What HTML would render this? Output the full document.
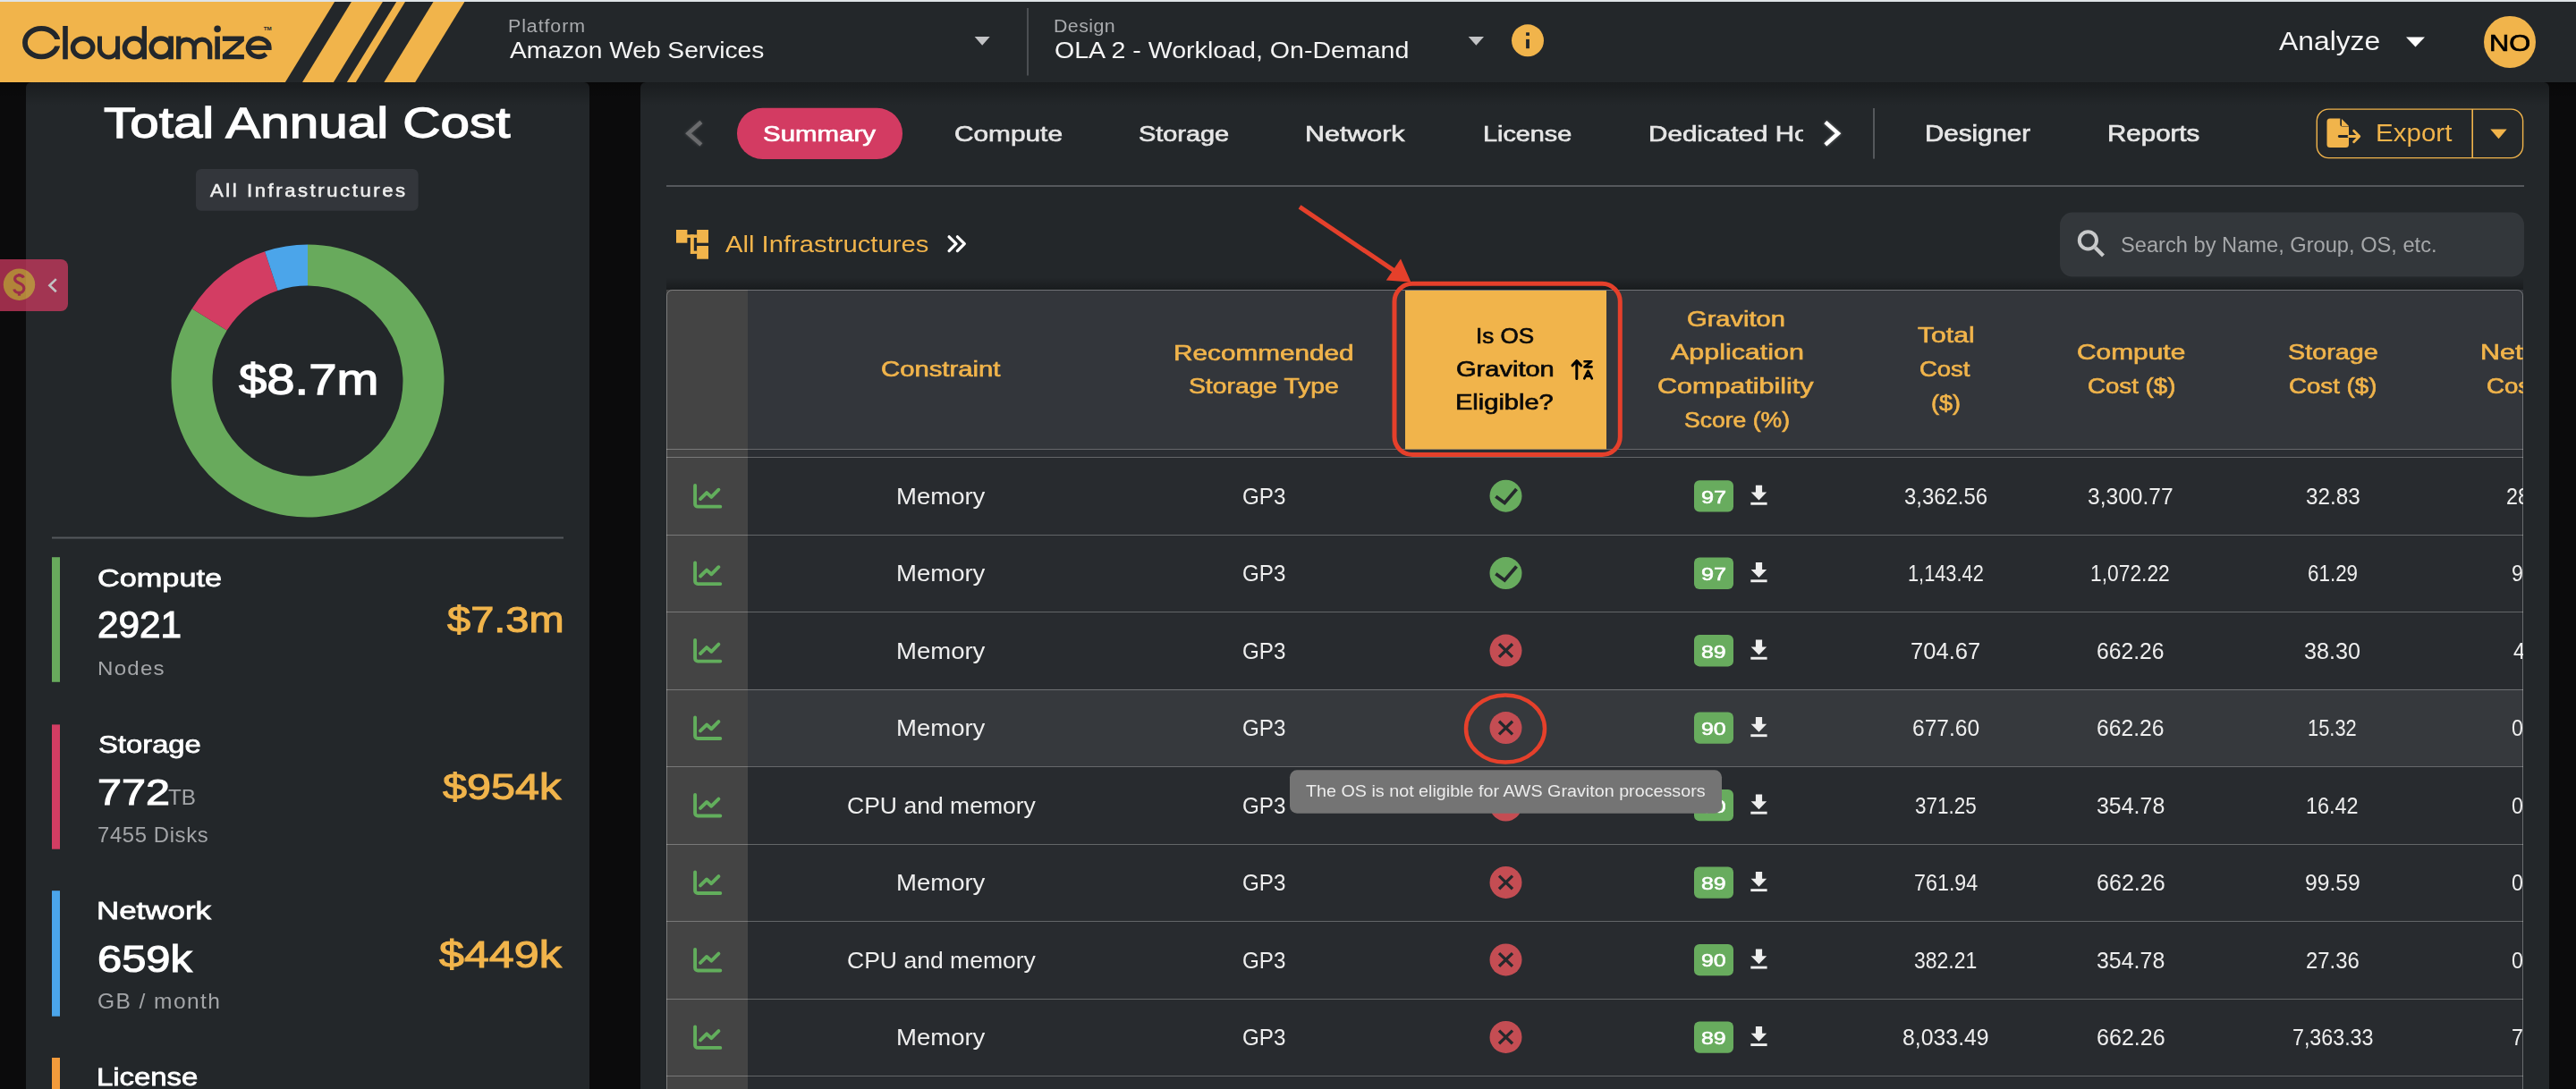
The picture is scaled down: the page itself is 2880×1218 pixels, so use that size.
<!DOCTYPE html>
<html><head><meta charset="utf-8"><title>Cloudamize</title>
<style>
html,body{margin:0;padding:0;width:2880px;height:1218px;overflow:hidden;background:#0b0b0c;}
body{position:relative;font-family:"Liberation Sans",sans-serif;}
.L{position:absolute;left:0;top:0;display:block;}
.t{position:absolute;white-space:nowrap;transform-origin:0 0;}
.clip{position:absolute;overflow:hidden;}
</style></head><body>
<svg class="L" width="2880" height="1218" viewBox="0 0 2880 1218"><rect x="0" y="0" width="2880" height="2" fill="#dfe4e7"/><rect x="0" y="2" width="2880" height="90" fill="#23272a"/><polygon points="0,2 374.1,2 318.9,92 0,92" fill="#F1B44B"/><polygon points="392.9,2 427.9,2 372.9,92 338.0,92" fill="#F1B44B"/><polygon points="443.2,2 453.0,2 397.8,92 387.8,92" fill="#F1B44B"/><polygon points="484.5,2 519.4,2 464.2,92 429.3,92" fill="#F1B44B"/><g><defs><clipPath id="cc"><path d="M0 0 H67 V43.9 H52 V51.4 H67 V80 H0 Z"/></clipPath></defs><ellipse cx="46.3" cy="47.65" rx="18.35" ry="15.8" fill="none" stroke="#23272b" stroke-width="5.8" clip-path="url(#cc)"/><rect x="70.2" y="29" width="5.6" height="37.3" fill="#23272b"/><ellipse cx="92.6" cy="53.35" rx="11.1" ry="10.2" fill="none" stroke="#23272b" stroke-width="5.5"/><path d="M 111.5 40.4 V 54 A 10 10 0 0 0 131.6 54" fill="none" stroke="#23272b" stroke-width="5.0"/><rect x="129.1" y="40.4" width="5" height="25.9" fill="#23272b"/><ellipse cx="150" cy="53.4" rx="10.6" ry="10.3" fill="none" stroke="#23272b" stroke-width="5.5"/><rect x="158.7" y="29.1" width="5.3" height="37.2" fill="#23272b"/><ellipse cx="180" cy="53.4" rx="10.8" ry="10.3" fill="none" stroke="#23272b" stroke-width="5.5"/><rect x="188.3" y="40.4" width="5.6" height="25.9" fill="#23272b"/><path d="M 199.7 66.3 V 40.4 M 199.7 52 A 8.8 8.8 0 0 1 217.2 52 V 66.3 M 217.2 52 A 8.8 8.8 0 0 1 234.7 52 V 66.3" fill="none" stroke="#23272b" stroke-width="5.2"/><rect x="240.3" y="40.6" width="5.6" height="25.7" fill="#23272b"/><circle cx="243.1" cy="32.4" r="3.8" fill="#23272b"/><path d="M 248.8 40.6 H 272.9 V 45.9 L 255.5 60.9 H 272.9 V 66.3 H 248.8 V 61 L 266.2 45.9 H 248.8 Z" fill="#23272b"/><path d="M 277.5 53.3 H 301 A 11.8 10.3 0 1 0 297.5 60.5" fill="none" stroke="#23272b" stroke-width="5.3"/><text x="294.8" y="34" font-family="Liberation Sans" font-size="6.2" font-weight="bold" fill="#23272b">TM</text></g><polygon points="1089.6,41 1106.7,41 1098.15,50.7" fill="#c2c3c5"/><rect x="1148" y="9" width="2" height="75.5" fill="#4b4e52"/><polygon points="1641.7,41 1659,41 1650.35,50.7" fill="#c2c3c5"/><circle cx="1708" cy="45.3" r="18" fill="#F1B44B"/><rect x="1706.1" y="36.3" width="3.8" height="3.6" fill="#23272a"/><rect x="1706.1" y="43.9" width="3.8" height="10.3" fill="#23272a"/><polygon points="2690,41.6 2711,41.6 2700.5,52.5" fill="#ffffff"/><circle cx="2806" cy="46.9" r="29" fill="#F1B44B"/><rect x="0" y="92" width="2880" height="1126" fill="#0b0b0c"/><path d="M29 98 a6 6 0 0 1 6 -6 H653 a6 6 0 0 1 6 6 V1218 H29 Z" fill="#23272a"/><path d="M716 98 a6 6 0 0 1 6 -6 H2844 a6 6 0 0 1 6 6 V1218 H716 Z" fill="#23272a"/><defs><linearGradient id="tg" x1="0" y1="0" x2="0" y2="1"><stop offset="0" stop-color="#000" stop-opacity="0.28"/><stop offset="1" stop-color="#000" stop-opacity="0"/></linearGradient></defs><rect x="29" y="92" width="630" height="26" fill="url(#tg)"/><rect x="716" y="92" width="2134" height="26" fill="url(#tg)"/><rect x="0" y="92" width="29" height="18" fill="url(#tg)"/><rect x="659" y="92" width="57" height="18" fill="url(#tg)"/><rect x="2850" y="92" width="30" height="18" fill="url(#tg)"/><rect x="219" y="189" width="248.6" height="46.7" rx="6" fill="#33363b"/><path d="M344.00 273.50 A152.5 152.5 0 1 1 214.67 345.19 L253.68 369.56 A106.5 106.5 0 1 0 344.00 319.50 Z" fill="#68AA5C"/><path d="M214.67 345.19 A152.5 152.5 0 0 1 296.12 281.21 L310.56 324.89 A106.5 106.5 0 0 0 253.68 369.56 Z" fill="#D33D63"/><path d="M296.12 281.21 A152.5 152.5 0 0 1 344.00 273.50 L344.00 319.50 A106.5 106.5 0 0 0 310.56 324.89 Z" fill="#4BA5EA"/><rect x="58" y="600.5" width="572" height="2" fill="#55585c"/><g opacity="0.72"><path d="M0 290 H68 a8 8 0 0 1 8 8 V340 a8 8 0 0 1 -8 8 H0 Z" fill="#D33B62"/><circle cx="21.5" cy="318.2" r="17.7" fill="#F1B44B"/><path d="M26.3 310.6 C25.5 308.6 23.6 307.9 21.5 307.9 C18.3 307.9 16.6 309.8 16.6 312.1 C16.6 317.5 26.8 315.6 26.8 322.4 C26.8 325.3 24.5 327.4 21.5 327.4 C18.6 327.4 16.4 326 15.8 323.5 M21.5 306 V309.5 M21.5 326 V330.8" fill="none" stroke="#D33B62" stroke-width="3.2"/><path d="M62.8 312.1 L55.4 319.2 L62.8 326.2" fill="none" stroke="#ffffff" stroke-width="2.6"/></g><rect x="58" y="623.2" width="9" height="139.6" fill="#68AA5C"/><rect x="58" y="810.4" width="9" height="139.3" fill="#D33D63"/><rect x="58" y="996.2" width="9" height="140.5" fill="#4BA5EA"/><rect x="58" y="1183" width="9" height="40" fill="#F39B3B"/><defs><filter id="glow" x="-50%" y="-50%" width="200%" height="200%"><feGaussianBlur stdDeviation="1.6"/></filter></defs><path d="M783.9 136.5 L769.5 149.2 L783.9 161.9" fill="none" stroke="#8a8b8d" stroke-width="5" opacity="0.35" filter="url(#glow)"/><path d="M783.9 136.5 L769.5 149.2 L783.9 161.9" fill="none" stroke="#6a6b6d" stroke-width="4.4"/><rect x="824" y="120.7" width="185" height="57.3" rx="28.6" fill="#D33B62"/><path d="M2040.8 136.7 L2055 149.2 L2040.8 161.9" fill="none" stroke="#ffffff" stroke-width="5" opacity="0.35" filter="url(#glow)"/><path d="M2040.8 136.7 L2055 149.2 L2040.8 161.9" fill="none" stroke="#ffffff" stroke-width="4.4"/><rect x="2094" y="121" width="2" height="56.6" fill="#55585c"/><rect x="2590.3" y="122.1" width="230.3" height="54.5" rx="13" fill="none" stroke="#F1B44B" stroke-width="1.4"/><rect x="2763.4" y="122" width="1.6" height="55" fill="#F1B44B"/><path d="M2605 132.6 H2616.3 V139 a2.5 2.5 0 0 0 2.5 2.5 H2626 V161.5 a3.5 3.5 0 0 1 -3.5 3.5 H2605 a3.5 3.5 0 0 1 -3.5 -3.5 V136.1 a3.5 3.5 0 0 1 3.5 -3.5 Z M2618 133 L2626 140.9 H2618 Z" fill="#F1B44B"/><path d="M2615.3 152.5 H2626" stroke="#23272a" stroke-width="2.8" stroke-linecap="round"/><path d="M2626 152.5 H2636.5 M2631.6 146.2 L2637.8 152.5 L2631.6 158.8" fill="none" stroke="#F1B44B" stroke-width="2.8" stroke-linecap="round" stroke-linejoin="round"/><polygon points="2784.3,144.4 2802.7,144.4 2793.5,155.3" fill="#F1B44B"/><rect x="745" y="207" width="2077" height="2" fill="#55585c"/><g fill="#F1B44B"><rect x="756" y="257" width="12.4" height="14.7"/><rect x="779.1" y="257" width="12.9" height="14.7"/><rect x="779.1" y="275" width="12.9" height="14.7"/><rect x="768" y="262.4" width="11.5" height="3.5"/><rect x="771.9" y="262.4" width="3.9" height="21.5"/><rect x="771.9" y="280.6" width="7.5" height="3.3"/></g><path d="M1061.1 264.8 L1069 272.7 L1061.1 280.6 M1070.4 264.8 L1078.3 272.7 L1070.4 280.6" fill="none" stroke="#ffffff" stroke-width="3.3" stroke-linecap="round" stroke-linejoin="round"/><rect x="2303" y="237.6" width="519" height="72" rx="14" fill="#33373b"/><circle cx="2334.4" cy="268.8" r="9.6" fill="none" stroke="#c8c9ca" stroke-width="4"/><path d="M2342.5 277 L2351.5 286" stroke="#c8c9ca" stroke-width="4.2"/><defs><linearGradient id="tg2" x1="0" y1="0" x2="0" y2="1"><stop offset="0" stop-color="#000" stop-opacity="0"/><stop offset="1" stop-color="#000" stop-opacity="0.3"/></linearGradient></defs><rect x="745" y="310" width="2076" height="14" fill="url(#tg2)"/><path d="M745 330 a6 6 0 0 1 6 -6 H2815 a6 6 0 0 1 6 6 V1218 H745 Z" fill="#282b2f"/><rect x="745" y="324" width="2076" height="178.39999999999998" fill="#33363b"/><rect x="745" y="502.4" width="2076" height="9" fill="#2b2e33"/><rect x="745" y="770.81" width="2076" height="86.47" fill="#36393d"/><rect x="745" y="324" width="91" height="894" fill="#444444"/><rect x="745" y="502" width="2076" height="1" fill="#ffffff" fill-opacity="0.28"/><rect x="745" y="511" width="2076" height="1" fill="#ffffff" fill-opacity="0.28"/><rect x="745" y="598" width="2076" height="1" fill="#ffffff" fill-opacity="0.28"/><rect x="745" y="684" width="2076" height="1" fill="#ffffff" fill-opacity="0.28"/><rect x="745" y="771" width="2076" height="1" fill="#ffffff" fill-opacity="0.28"/><rect x="745" y="857" width="2076" height="1" fill="#ffffff" fill-opacity="0.28"/><rect x="745" y="944" width="2076" height="1" fill="#ffffff" fill-opacity="0.28"/><rect x="745" y="1030" width="2076" height="1" fill="#ffffff" fill-opacity="0.28"/><rect x="745" y="1117" width="2076" height="1" fill="#ffffff" fill-opacity="0.28"/><rect x="745" y="1203" width="2076" height="1" fill="#ffffff" fill-opacity="0.28"/><path d="M745.5 1218 V330.5 a6 6 0 0 1 6 -6 H2814.5 a6 6 0 0 1 6 6 V1218" fill="none" stroke="#ffffff" stroke-opacity="0.3" stroke-width="1"/><rect x="1571" y="325" width="225" height="177.4" fill="#F1B44B"/><path d="M1762.8 423.5 V403.5 M1758 408.8 L1762.8 403.5 L1767.6 408.8" fill="none" stroke="#000" stroke-width="3" stroke-linecap="round" stroke-linejoin="round"/><path d="M1771.5 404.3 H1779.3 L1771.5 410.4 H1779.6" fill="none" stroke="#000" stroke-width="2.6" stroke-linecap="round" stroke-linejoin="round"/><path d="M1771.3 423.3 L1775.5 414.8 L1779.8 423.3 M1772.8 420.6 H1778.3" fill="none" stroke="#000" stroke-width="2.6" stroke-linecap="round" stroke-linejoin="round"/><path d="M777.1 543.03 V563.63 a3 3 0 0 0 3 3 H805.3 M783 558.03 L790.1 551.13 L795.3 555.84 L803.4 547.74" fill="none" stroke="#62AE5C" stroke-width="3.9" stroke-linecap="round" stroke-linejoin="round"/><circle cx="1683.5" cy="554.63" r="18" fill="#68AC5E"/><path d="M1672.3 555.24 L1682.2 562.53 L1695.5 547.03" fill="none" stroke="#25282c" stroke-width="3.8"/><rect x="1894" y="537.13" width="44" height="35.3" rx="6" fill="#68AC5E"/><path d="M1962.9 542.63 H1970.1 V550.43 H1975.2 L1966.5 559.43 L1957.6 550.43 H1962.9 Z" fill="#eeeeee"/><rect x="1957.3" y="561.84" width="18.3" height="2.9" fill="#eeeeee"/><path d="M777.1 629.50 V650.11 a3 3 0 0 0 3 3 H805.3 M783 644.50 L790.1 637.61 L795.3 642.31 L803.4 634.21" fill="none" stroke="#62AE5C" stroke-width="3.9" stroke-linecap="round" stroke-linejoin="round"/><circle cx="1683.5" cy="641.11" r="18" fill="#68AC5E"/><path d="M1672.3 641.71 L1682.2 649.00 L1695.5 633.50" fill="none" stroke="#25282c" stroke-width="3.8"/><rect x="1894" y="623.61" width="44" height="35.3" rx="6" fill="#68AC5E"/><path d="M1962.9 629.11 H1970.1 V636.90 H1975.2 L1966.5 645.90 L1957.6 636.90 H1962.9 Z" fill="#eeeeee"/><rect x="1957.3" y="648.31" width="18.3" height="2.9" fill="#eeeeee"/><path d="M777.1 715.98 V736.58 a3 3 0 0 0 3 3 H805.3 M783 730.98 L790.1 724.08 L795.3 728.78 L803.4 720.68" fill="none" stroke="#62AE5C" stroke-width="3.9" stroke-linecap="round" stroke-linejoin="round"/><circle cx="1683.5" cy="727.58" r="18" fill="#C44D53"/><path d="M1676 720.28 L1691 734.88 M1691 720.28 L1676 734.88" fill="none" stroke="#25282c" stroke-width="3.3"/><rect x="1894" y="710.08" width="44" height="35.3" rx="6" fill="#68AC5E"/><path d="M1962.9 715.58 H1970.1 V723.38 H1975.2 L1966.5 732.38 L1957.6 723.38 H1962.9 Z" fill="#eeeeee"/><rect x="1957.3" y="734.78" width="18.3" height="2.9" fill="#eeeeee"/><path d="M777.1 802.44 V823.04 a3 3 0 0 0 3 3 H805.3 M783 817.44 L790.1 810.54 L795.3 815.25 L803.4 807.14" fill="none" stroke="#62AE5C" stroke-width="3.9" stroke-linecap="round" stroke-linejoin="round"/><circle cx="1683.5" cy="814.04" r="18" fill="#C44D53"/><path d="M1676 806.75 L1691 821.34 M1691 806.75 L1676 821.34" fill="none" stroke="#25282c" stroke-width="3.3"/><rect x="1894" y="796.54" width="44" height="35.3" rx="6" fill="#68AC5E"/><path d="M1962.9 802.04 H1970.1 V809.84 H1975.2 L1966.5 818.84 L1957.6 809.84 H1962.9 Z" fill="#eeeeee"/><rect x="1957.3" y="821.25" width="18.3" height="2.9" fill="#eeeeee"/><path d="M777.1 888.91 V909.51 a3 3 0 0 0 3 3 H805.3 M783 903.91 L790.1 897.01 L795.3 901.72 L803.4 893.62" fill="none" stroke="#62AE5C" stroke-width="3.9" stroke-linecap="round" stroke-linejoin="round"/><circle cx="1683.5" cy="900.51" r="18" fill="#C44D53"/><path d="M1676 893.22 L1691 907.81 M1691 893.22 L1676 907.81" fill="none" stroke="#25282c" stroke-width="3.3"/><rect x="1894" y="883.01" width="44" height="35.3" rx="6" fill="#68AC5E"/><path d="M1962.9 888.51 H1970.1 V896.31 H1975.2 L1966.5 905.31 L1957.6 896.31 H1962.9 Z" fill="#eeeeee"/><rect x="1957.3" y="907.72" width="18.3" height="2.9" fill="#eeeeee"/><path d="M777.1 975.38 V995.98 a3 3 0 0 0 3 3 H805.3 M783 990.38 L790.1 983.48 L795.3 988.18 L803.4 980.08" fill="none" stroke="#62AE5C" stroke-width="3.9" stroke-linecap="round" stroke-linejoin="round"/><circle cx="1683.5" cy="986.98" r="18" fill="#C44D53"/><path d="M1676 979.68 L1691 994.28 M1691 979.68 L1676 994.28" fill="none" stroke="#25282c" stroke-width="3.3"/><rect x="1894" y="969.48" width="44" height="35.3" rx="6" fill="#68AC5E"/><path d="M1962.9 974.98 H1970.1 V982.78 H1975.2 L1966.5 991.78 L1957.6 982.78 H1962.9 Z" fill="#eeeeee"/><rect x="1957.3" y="994.18" width="18.3" height="2.9" fill="#eeeeee"/><path d="M777.1 1061.86 V1082.45 a3 3 0 0 0 3 3 H805.3 M783 1076.86 L790.1 1069.95 L795.3 1074.65 L803.4 1066.55" fill="none" stroke="#62AE5C" stroke-width="3.9" stroke-linecap="round" stroke-linejoin="round"/><circle cx="1683.5" cy="1073.45" r="18" fill="#C44D53"/><path d="M1676 1066.15 L1691 1080.75 M1691 1066.15 L1676 1080.75" fill="none" stroke="#25282c" stroke-width="3.3"/><rect x="1894" y="1055.95" width="44" height="35.3" rx="6" fill="#68AC5E"/><path d="M1962.9 1061.45 H1970.1 V1069.25 H1975.2 L1966.5 1078.25 L1957.6 1069.25 H1962.9 Z" fill="#eeeeee"/><rect x="1957.3" y="1080.65" width="18.3" height="2.9" fill="#eeeeee"/><path d="M777.1 1148.33 V1168.92 a3 3 0 0 0 3 3 H805.3 M783 1163.33 L790.1 1156.42 L795.3 1161.12 L803.4 1153.02" fill="none" stroke="#62AE5C" stroke-width="3.9" stroke-linecap="round" stroke-linejoin="round"/><circle cx="1683.5" cy="1159.92" r="18" fill="#C44D53"/><path d="M1676 1152.62 L1691 1167.22 M1691 1152.62 L1676 1167.22" fill="none" stroke="#25282c" stroke-width="3.3"/><rect x="1894" y="1142.42" width="44" height="35.3" rx="6" fill="#68AC5E"/><path d="M1962.9 1147.92 H1970.1 V1155.72 H1975.2 L1966.5 1164.72 L1957.6 1155.72 H1962.9 Z" fill="#eeeeee"/><rect x="1957.3" y="1167.12" width="18.3" height="2.9" fill="#eeeeee"/><path d="M777.1 1234.80 V1255.39" fill="none" stroke="#62AE5C" stroke-width="3.9" stroke-linecap="round"/></svg>
<div class="t" style="left:567.83px;top:19.17px;font-size:20.35px;line-height:20.35px;color:#a9abae;transform:scaleX(1.0500);letter-spacing:0.874px;">Platform</div><div class="t" style="left:569.50px;top:43.27px;font-size:26.02px;line-height:26.02px;color:#f4f4f4;transform:scaleX(1.0826);">Amazon Web Services</div><div class="t" style="left:1178.33px;top:19.17px;font-size:20.35px;line-height:20.35px;color:#a9abae;transform:scaleX(1.0500);letter-spacing:0.411px;">Design</div><div class="t" style="left:1178.66px;top:43.27px;font-size:26.02px;line-height:26.02px;color:#f4f4f4;transform:scaleX(1.0979);">OLA 2 - Workload, On-Demand</div><div class="t" style="left:2547.90px;top:30.60px;font-size:30.23px;line-height:30.23px;color:#f4f4f4;transform:scaleX(1.0533);">Analyze</div><div class="t" style="left:2783.01px;top:34.55px;font-size:26.16px;line-height:26.16px;color:#000000;-webkit-text-stroke:0.70px #000000;transform:scaleX(1.1779);">NO</div><div class="t" style="left:115.66px;top:112.84px;font-size:48.85px;line-height:48.85px;color:#ffffff;-webkit-text-stroke:1.29px #ffffff;transform:scaleX(1.1954);">Total Annual Cost</div><div class="t" style="left:234.50px;top:202.66px;font-size:20.83px;line-height:20.83px;color:#eeeeee;-webkit-text-stroke:0.57px #eeeeee;transform:scaleX(1.0600);letter-spacing:2.425px;">All Infrastructures</div><div class="t" style="left:267.05px;top:399.84px;font-size:48.85px;line-height:48.85px;color:#ffffff;-webkit-text-stroke:1.29px #ffffff;transform:scaleX(1.1522);">$8.7m</div><div class="t" style="left:109.35px;top:631.87px;font-size:28.26px;line-height:28.26px;color:#ffffff;-webkit-text-stroke:0.76px #ffffff;transform:scaleX(1.2130);">Compute</div><div class="t" style="left:109.08px;top:677.32px;font-size:42.96px;line-height:42.96px;color:#ffffff;-webkit-text-stroke:1.14px #ffffff;transform:scaleX(0.9842);">2921</div><div class="t" style="left:108.92px;top:735.96px;font-size:22.97px;line-height:22.97px;color:#a3a5a8;transform:scaleX(1.0500);letter-spacing:1.175px;">Nodes</div><div class="t" style="left:499.63px;top:673.32px;font-size:40.72px;line-height:40.72px;color:#F1B44B;-webkit-text-stroke:1.08px #F1B44B;transform:scaleX(1.1546);">$7.3m</div><div class="t" style="left:109.92px;top:818.83px;font-size:27.84px;line-height:27.84px;color:#ffffff;-webkit-text-stroke:0.75px #ffffff;transform:scaleX(1.1782);">Storage</div><div class="t" style="left:108.87px;top:865.41px;font-size:41.56px;line-height:41.56px;color:#ffffff;-webkit-text-stroke:1.10px #ffffff;transform:scaleX(1.1673);">772</div><div class="t" style="left:187.82px;top:880.91px;font-size:23.26px;line-height:23.26px;color:#a3a5a8;transform:scaleX(1.0431);">TB</div><div class="t" style="left:109.38px;top:922.99px;font-size:23.40px;line-height:23.40px;color:#a3a5a8;transform:scaleX(1.0200);letter-spacing:0.609px;">7455 Disks</div><div class="t" style="left:495.15px;top:858.81px;font-size:41.56px;line-height:41.56px;color:#F1B44B;-webkit-text-stroke:1.10px #F1B44B;transform:scaleX(1.1678);">$954k</div><div class="t" style="left:108.24px;top:1004.24px;font-size:28.54px;line-height:28.54px;color:#ffffff;-webkit-text-stroke:0.77px #ffffff;transform:scaleX(1.2234);">Network</div><div class="t" style="left:108.86px;top:1051.55px;font-size:41.98px;line-height:41.98px;color:#ffffff;-webkit-text-stroke:1.12px #ffffff;transform:scaleX(1.1635);">659k</div><div class="t" style="left:109.35px;top:1109.19px;font-size:23.40px;line-height:23.40px;color:#a3a5a8;transform:scaleX(1.0500);letter-spacing:1.350px;">GB / month</div><div class="t" style="left:490.57px;top:1046.77px;font-size:41.84px;line-height:41.84px;color:#F1B44B;-webkit-text-stroke:1.11px #F1B44B;transform:scaleX(1.1998);">$449k</div><div class="t" style="left:108.37px;top:1190.44px;font-size:28.54px;line-height:28.54px;color:#ffffff;-webkit-text-stroke:0.77px #ffffff;transform:scaleX(1.1521);">License</div><div class="t" style="left:853.18px;top:137.51px;font-size:24.20px;line-height:24.20px;color:#ffffff;-webkit-text-stroke:0.65px #ffffff;transform:scaleX(1.2165);">Summary</div><div class="t" style="left:1066.61px;top:137.51px;font-size:24.20px;line-height:24.20px;color:#e6e6e6;-webkit-text-stroke:0.65px #e6e6e6;transform:scaleX(1.2325);">Compute</div><div class="t" style="left:1273.29px;top:137.51px;font-size:24.20px;line-height:24.20px;color:#e6e6e6;-webkit-text-stroke:0.65px #e6e6e6;transform:scaleX(1.1941);">Storage</div><div class="t" style="left:1459.23px;top:137.51px;font-size:24.20px;line-height:24.20px;color:#e6e6e6;-webkit-text-stroke:0.65px #e6e6e6;transform:scaleX(1.2574);">Network</div><div class="t" style="left:1657.94px;top:137.51px;font-size:24.20px;line-height:24.20px;color:#e6e6e6;-webkit-text-stroke:0.65px #e6e6e6;transform:scaleX(1.1900);">License</div><div class="clip" style="left:1840px;width:175.5px;top:117.51px;height:64.20px"><div class="t" style="left:3.49px;top:20px;font-size:24.20px;line-height:24.20px;color:#e6e6e6;-webkit-text-stroke:0.65px #e6e6e6;transform:scaleX(1.2250);">Dedicated Hosts</div></div><div class="t" style="left:2151.69px;top:137.20px;font-size:25.04px;line-height:25.04px;color:#e6e6e6;-webkit-text-stroke:0.68px #e6e6e6;transform:scaleX(1.1783);">Designer</div><div class="t" style="left:2356.09px;top:137.20px;font-size:25.04px;line-height:25.04px;color:#e6e6e6;-webkit-text-stroke:0.68px #e6e6e6;transform:scaleX(1.1788);">Reports</div><div class="t" style="left:2655.99px;top:135.51px;font-size:27.04px;line-height:27.04px;color:#F1B44B;transform:scaleX(1.0931);">Export</div><div class="t" style="left:810.60px;top:260.05px;font-size:26.16px;line-height:26.16px;color:#F1B44B;transform:scaleX(1.1167);">All Infrastructures</div><div class="t" style="left:2371.26px;top:262.29px;font-size:23.98px;line-height:23.98px;color:#a6a8aa;transform:scaleX(0.9867);">Search by Name, Group, OS, etc.</div><div class="t" style="left:985.22px;top:400.51px;font-size:24.20px;line-height:24.20px;color:#F1B44B;-webkit-text-stroke:0.65px #F1B44B;transform:scaleX(1.2105);">Constraint</div><div class="t" style="left:1311.63px;top:383.11px;font-size:24.20px;line-height:24.20px;color:#F1B44B;-webkit-text-stroke:0.65px #F1B44B;transform:scaleX(1.2293);">Recommended</div><div class="t" style="left:1328.75px;top:420.11px;font-size:24.20px;line-height:24.20px;color:#F1B44B;-webkit-text-stroke:0.65px #F1B44B;transform:scaleX(1.1699);">Storage Type</div><div class="t" style="left:1650.47px;top:364.17px;font-size:23.77px;line-height:23.77px;color:#0a0a0a;-webkit-text-stroke:0.64px #0a0a0a;transform:scaleX(1.0955);">Is OS</div><div class="t" style="left:1628.33px;top:401.47px;font-size:23.77px;line-height:23.77px;color:#0a0a0a;-webkit-text-stroke:0.64px #0a0a0a;transform:scaleX(1.2221);">Graviton</div><div class="t" style="left:1627.42px;top:438.47px;font-size:23.77px;line-height:23.77px;color:#0a0a0a;-webkit-text-stroke:0.64px #0a0a0a;transform:scaleX(1.2218);">Eligible?</div><div class="t" style="left:1886.43px;top:344.51px;font-size:24.20px;line-height:24.20px;color:#F1B44B;-webkit-text-stroke:0.65px #F1B44B;transform:scaleX(1.2031);">Graviton</div><div class="t" style="left:1867.71px;top:382.21px;font-size:24.20px;line-height:24.20px;color:#F1B44B;-webkit-text-stroke:0.65px #F1B44B;transform:scaleX(1.2579);">Application</div><div class="t" style="left:1853.28px;top:420.01px;font-size:24.20px;line-height:24.20px;color:#F1B44B;-webkit-text-stroke:0.65px #F1B44B;transform:scaleX(1.2607);">Compatibility</div><div class="t" style="left:1882.53px;top:457.71px;font-size:24.20px;line-height:24.20px;color:#F1B44B;-webkit-text-stroke:0.65px #F1B44B;transform:scaleX(1.0979);">Score (%)</div><div class="t" style="left:2144.24px;top:363.41px;font-size:24.20px;line-height:24.20px;color:#F1B44B;-webkit-text-stroke:0.65px #F1B44B;transform:scaleX(1.2453);">Total</div><div class="t" style="left:2146.38px;top:401.11px;font-size:24.20px;line-height:24.20px;color:#F1B44B;-webkit-text-stroke:0.65px #F1B44B;transform:scaleX(1.1347);">Cost</div><div class="t" style="left:2158.90px;top:438.81px;font-size:24.20px;line-height:24.20px;color:#F1B44B;-webkit-text-stroke:0.65px #F1B44B;transform:scaleX(1.1136);">($)</div><div class="t" style="left:2322.05px;top:382.21px;font-size:24.20px;line-height:24.20px;color:#F1B44B;-webkit-text-stroke:0.65px #F1B44B;transform:scaleX(1.2356);">Compute</div><div class="t" style="left:2333.68px;top:420.01px;font-size:24.20px;line-height:24.20px;color:#F1B44B;-webkit-text-stroke:0.65px #F1B44B;transform:scaleX(1.1434);">Cost ($)</div><div class="t" style="left:2558.19px;top:382.21px;font-size:24.20px;line-height:24.20px;color:#F1B44B;-webkit-text-stroke:0.65px #F1B44B;transform:scaleX(1.1882);">Storage</div><div class="t" style="left:2559.28px;top:420.01px;font-size:24.20px;line-height:24.20px;color:#F1B44B;-webkit-text-stroke:0.65px #F1B44B;transform:scaleX(1.1434);">Cost ($)</div><div class="clip" style="left:2760px;width:61px;top:362.21px;height:64.20px"><div class="t" style="left:12.83px;top:20px;font-size:24.20px;line-height:24.20px;color:#F1B44B;-webkit-text-stroke:0.65px #F1B44B;transform:scaleX(1.2574);">Network</div></div><div class="clip" style="left:2760px;width:61px;top:400.01px;height:64.20px"><div class="t" style="left:20.28px;top:20px;font-size:24.20px;line-height:24.20px;color:#F1B44B;-webkit-text-stroke:0.65px #F1B44B;transform:scaleX(1.1434);">Cost ($)</div></div><div class="t" style="left:1002.05px;top:542.87px;font-size:25.00px;line-height:25.00px;color:#eeeeee;transform:scaleX(1.1004);">Memory</div><div class="t" style="left:1388.72px;top:542.87px;font-size:25.00px;line-height:25.00px;color:#eeeeee;transform:scaleX(0.9678);">GP3</div><div class="t" style="left:1901.76px;top:544.66px;font-size:21.11px;line-height:21.11px;color:#ffffff;-webkit-text-stroke:0.57px #ffffff;transform:scaleX(1.1975);">97</div><div class="t" style="left:2129.00px;top:542.87px;font-size:25.00px;line-height:25.00px;color:#eeeeee;transform:scaleX(0.9558);">3,362.56</div><div class="t" style="left:2334.28px;top:542.87px;font-size:25.00px;line-height:25.00px;color:#eeeeee;transform:scaleX(0.9830);">3,300.77</div><div class="t" style="left:2577.74px;top:542.87px;font-size:25.00px;line-height:25.00px;color:#eeeeee;transform:scaleX(0.9709);">32.83</div><div class="clip" style="left:2760px;width:61px;top:522.87px;height:65.00px"><div class="t" style="left:41.83px;top:20px;font-size:25.00px;line-height:25.00px;color:#eeeeee;transform:scaleX(0.9300);">28.96</div></div><div class="t" style="left:1002.05px;top:629.34px;font-size:25.00px;line-height:25.00px;color:#eeeeee;transform:scaleX(1.1004);">Memory</div><div class="t" style="left:1388.72px;top:629.34px;font-size:25.00px;line-height:25.00px;color:#eeeeee;transform:scaleX(0.9678);">GP3</div><div class="t" style="left:1901.76px;top:631.13px;font-size:21.11px;line-height:21.11px;color:#ffffff;-webkit-text-stroke:0.57px #ffffff;transform:scaleX(1.1975);">97</div><div class="t" style="left:2132.79px;top:629.34px;font-size:25.00px;line-height:25.00px;color:#eeeeee;transform:scaleX(0.8708);">1,143.42</div><div class="t" style="left:2337.38px;top:629.34px;font-size:25.00px;line-height:25.00px;color:#eeeeee;transform:scaleX(0.9120);">1,072.22</div><div class="t" style="left:2579.90px;top:629.34px;font-size:25.00px;line-height:25.00px;color:#eeeeee;transform:scaleX(0.8960);">61.29</div><div class="clip" style="left:2760px;width:61px;top:609.34px;height:65.00px"><div class="t" style="left:48.30px;top:20px;font-size:25.00px;line-height:25.00px;color:#eeeeee;transform:scaleX(0.9300);">9.91</div></div><div class="t" style="left:1002.05px;top:715.81px;font-size:25.00px;line-height:25.00px;color:#eeeeee;transform:scaleX(1.1004);">Memory</div><div class="t" style="left:1388.72px;top:715.81px;font-size:25.00px;line-height:25.00px;color:#eeeeee;transform:scaleX(0.9678);">GP3</div><div class="t" style="left:1902.16px;top:717.60px;font-size:21.11px;line-height:21.11px;color:#ffffff;-webkit-text-stroke:0.57px #ffffff;transform:scaleX(1.1799);">89</div><div class="t" style="left:2136.20px;top:715.81px;font-size:25.00px;line-height:25.00px;color:#eeeeee;transform:scaleX(1.0231);">704.67</div><div class="t" style="left:2344.14px;top:715.81px;font-size:25.00px;line-height:25.00px;color:#eeeeee;transform:scaleX(0.9881);">662.26</div><div class="t" style="left:2576.41px;top:715.81px;font-size:25.00px;line-height:25.00px;color:#eeeeee;transform:scaleX(1.0072);">38.30</div><div class="clip" style="left:2760px;width:61px;top:695.81px;height:65.00px"><div class="t" style="left:49.53px;top:20px;font-size:25.00px;line-height:25.00px;color:#eeeeee;transform:scaleX(0.9300);">4.11</div></div><div class="t" style="left:1002.05px;top:802.28px;font-size:25.00px;line-height:25.00px;color:#eeeeee;transform:scaleX(1.1004);">Memory</div><div class="t" style="left:1388.72px;top:802.28px;font-size:25.00px;line-height:25.00px;color:#eeeeee;transform:scaleX(0.9678);">GP3</div><div class="t" style="left:1901.77px;top:804.07px;font-size:21.11px;line-height:21.11px;color:#ffffff;-webkit-text-stroke:0.57px #ffffff;transform:scaleX(1.1799);">90</div><div class="t" style="left:2137.55px;top:802.28px;font-size:25.00px;line-height:25.00px;color:#eeeeee;transform:scaleX(0.9830);">677.60</div><div class="t" style="left:2344.14px;top:802.28px;font-size:25.00px;line-height:25.00px;color:#eeeeee;transform:scaleX(0.9881);">662.26</div><div class="t" style="left:2580.38px;top:802.28px;font-size:25.00px;line-height:25.00px;color:#eeeeee;transform:scaleX(0.8752);">15.32</div><div class="clip" style="left:2760px;width:61px;top:782.28px;height:65.00px"><div class="t" style="left:48.48px;top:20px;font-size:25.00px;line-height:25.00px;color:#eeeeee;transform:scaleX(0.9300);">0.02</div></div><div class="t" style="left:946.76px;top:888.75px;font-size:25.00px;line-height:25.00px;color:#eeeeee;transform:scaleX(1.0613);">CPU and memory</div><div class="t" style="left:1388.72px;top:888.75px;font-size:25.00px;line-height:25.00px;color:#eeeeee;transform:scaleX(0.9678);">GP3</div><div class="t" style="left:1901.77px;top:890.54px;font-size:21.11px;line-height:21.11px;color:#ffffff;-webkit-text-stroke:0.57px #ffffff;transform:scaleX(1.1799);">90</div><div class="t" style="left:2141.15px;top:888.75px;font-size:25.00px;line-height:25.00px;color:#eeeeee;transform:scaleX(0.8986);">371.25</div><div class="t" style="left:2343.97px;top:888.75px;font-size:25.00px;line-height:25.00px;color:#eeeeee;transform:scaleX(0.9977);">354.78</div><div class="t" style="left:2578.49px;top:888.75px;font-size:25.00px;line-height:25.00px;color:#eeeeee;transform:scaleX(0.9352);">16.42</div><div class="clip" style="left:2760px;width:61px;top:868.75px;height:65.00px"><div class="t" style="left:48.48px;top:20px;font-size:25.00px;line-height:25.00px;color:#eeeeee;transform:scaleX(0.9300);">0.05</div></div><div class="t" style="left:1002.05px;top:975.22px;font-size:25.00px;line-height:25.00px;color:#eeeeee;transform:scaleX(1.1004);">Memory</div><div class="t" style="left:1388.72px;top:975.22px;font-size:25.00px;line-height:25.00px;color:#eeeeee;transform:scaleX(0.9678);">GP3</div><div class="t" style="left:1902.16px;top:977.01px;font-size:21.11px;line-height:21.11px;color:#ffffff;-webkit-text-stroke:0.57px #ffffff;transform:scaleX(1.1799);">89</div><div class="t" style="left:2139.51px;top:975.22px;font-size:25.00px;line-height:25.00px;color:#eeeeee;transform:scaleX(0.9321);">761.94</div><div class="t" style="left:2343.57px;top:975.22px;font-size:25.00px;line-height:25.00px;color:#eeeeee;transform:scaleX(1.0029);">662.26</div><div class="t" style="left:2577.04px;top:975.22px;font-size:25.00px;line-height:25.00px;color:#eeeeee;transform:scaleX(0.9871);">99.59</div><div class="clip" style="left:2760px;width:61px;top:955.22px;height:65.00px"><div class="t" style="left:48.48px;top:20px;font-size:25.00px;line-height:25.00px;color:#eeeeee;transform:scaleX(0.9300);">0.09</div></div><div class="t" style="left:946.76px;top:1061.69px;font-size:25.00px;line-height:25.00px;color:#eeeeee;transform:scaleX(1.0613);">CPU and memory</div><div class="t" style="left:1388.72px;top:1061.69px;font-size:25.00px;line-height:25.00px;color:#eeeeee;transform:scaleX(0.9678);">GP3</div><div class="t" style="left:1901.77px;top:1063.48px;font-size:21.11px;line-height:21.11px;color:#ffffff;-webkit-text-stroke:0.57px #ffffff;transform:scaleX(1.1799);">90</div><div class="t" style="left:2140.38px;top:1061.69px;font-size:25.00px;line-height:25.00px;color:#eeeeee;transform:scaleX(0.9187);">382.21</div><div class="t" style="left:2343.97px;top:1061.69px;font-size:25.00px;line-height:25.00px;color:#eeeeee;transform:scaleX(0.9977);">354.78</div><div class="t" style="left:2578.08px;top:1061.69px;font-size:25.00px;line-height:25.00px;color:#eeeeee;transform:scaleX(0.9540);">27.36</div><div class="clip" style="left:2760px;width:61px;top:1041.69px;height:65.00px"><div class="t" style="left:48.48px;top:20px;font-size:25.00px;line-height:25.00px;color:#eeeeee;transform:scaleX(0.9300);">0.07</div></div><div class="t" style="left:1002.05px;top:1148.16px;font-size:25.00px;line-height:25.00px;color:#eeeeee;transform:scaleX(1.1004);">Memory</div><div class="t" style="left:1388.72px;top:1148.16px;font-size:25.00px;line-height:25.00px;color:#eeeeee;transform:scaleX(0.9678);">GP3</div><div class="t" style="left:1902.16px;top:1149.95px;font-size:21.11px;line-height:21.11px;color:#ffffff;-webkit-text-stroke:0.57px #ffffff;transform:scaleX(1.1799);">89</div><div class="t" style="left:2127.17px;top:1148.16px;font-size:25.00px;line-height:25.00px;color:#eeeeee;transform:scaleX(0.9935);">8,033.49</div><div class="t" style="left:2343.57px;top:1148.16px;font-size:25.00px;line-height:25.00px;color:#eeeeee;transform:scaleX(1.0029);">662.26</div><div class="t" style="left:2562.71px;top:1148.16px;font-size:25.00px;line-height:25.00px;color:#eeeeee;transform:scaleX(0.9292);">7,363.33</div><div class="clip" style="left:2760px;width:61px;top:1128.16px;height:65.00px"><div class="t" style="left:48.12px;top:20px;font-size:25.00px;line-height:25.00px;color:#eeeeee;transform:scaleX(0.9300);">7.90</div></div>
<svg class="L" width="2880" height="1218" viewBox="0 0 2880 1218"><rect x="1442" y="861.3" width="483" height="48.4" rx="8" fill="#747474"/></svg>
<div class="t" style="left:1459.69px;top:875.28px;font-size:19.04px;line-height:19.04px;color:#ececec;transform:scaleX(1.0366);">The OS is not eligible for AWS Graviton processors</div>
<svg class="L" width="2880" height="1218" viewBox="0 0 2880 1218"><rect x="1559" y="317.3" width="252.3" height="191.3" rx="20" fill="none" stroke="#E5402B" stroke-width="5"/><ellipse cx="1683" cy="815" rx="44" ry="37.6" fill="none" stroke="#E5402B" stroke-width="4.5"/><path d="M1453 231.4 L1560 303.6" stroke="#E5402B" stroke-width="5"/><polygon points="1577.4,315.4 1549.8,313.4 1566,289.4" fill="#E5402B"/></svg>
</body></html>
